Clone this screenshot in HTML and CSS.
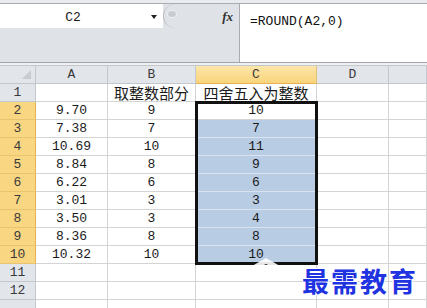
FILE: index.html
```html
<!DOCTYPE html>
<html lang="zh-CN">
<head>
    <meta charset="UTF-8">
    <title>ROUND</title>
    <link rel="stylesheet" href="styles.css">
</head>
<body>
    <div class="top-strip"></div>

    <div class="fbar">
        <div class="fbar-left">
            <div class="fbar-top">
                <div class="namebox">
                    <span class="namebox-text">C2</span>
                    <span class="arrow"></span>
                </div>
                <div class="splitter">
                    <span class="knob"></span>
                    <span class="fx">fx</span>
                </div>
            </div>
        </div>
        <div class="formula">=ROUND(A2,0)</div>
    </div>
    <div class="gap"></div>

    <div class="sheet-wrap">
        <div class="sheet">
            <div class="hd corner"><span class="tri"></span></div>
            <div class="hd">A</div>
            <div class="hd">B</div>
            <div class="hd hd-sel">C</div>
            <div class="hd">D</div>
            <div class="hd"></div>

            <div class="rh">1</div>
            <div class="c"></div>
            <div class="c cjk">取整数部分</div>
            <div class="c cjk">四舍五入为整数</div>
            <div class="c"></div>
            <div class="c"></div>

            <div class="rh rh-sel">2</div>
            <div class="c">9.70</div>
            <div class="c">9</div>
            <div class="c active">10</div>
            <div class="c"></div>
            <div class="c"></div>

            <div class="rh rh-sel">3</div>
            <div class="c">7.38</div>
            <div class="c">7</div>
            <div class="c sel">7</div>
            <div class="c"></div>
            <div class="c"></div>

            <div class="rh rh-sel">4</div>
            <div class="c">10.69</div>
            <div class="c">10</div>
            <div class="c sel">11</div>
            <div class="c"></div>
            <div class="c"></div>

            <div class="rh rh-sel">5</div>
            <div class="c">8.84</div>
            <div class="c">8</div>
            <div class="c sel">9</div>
            <div class="c"></div>
            <div class="c"></div>

            <div class="rh rh-sel">6</div>
            <div class="c">6.22</div>
            <div class="c">6</div>
            <div class="c sel">6</div>
            <div class="c"></div>
            <div class="c"></div>

            <div class="rh rh-sel">7</div>
            <div class="c">3.01</div>
            <div class="c">3</div>
            <div class="c sel">3</div>
            <div class="c"></div>
            <div class="c"></div>

            <div class="rh rh-sel">8</div>
            <div class="c">3.50</div>
            <div class="c">3</div>
            <div class="c sel">4</div>
            <div class="c"></div>
            <div class="c"></div>

            <div class="rh rh-sel">9</div>
            <div class="c">8.36</div>
            <div class="c">8</div>
            <div class="c sel">8</div>
            <div class="c"></div>
            <div class="c"></div>

            <div class="rh rh-sel">10</div>
            <div class="c">10.32</div>
            <div class="c">10</div>
            <div class="c sel">10</div>
            <div class="c"></div>
            <div class="c"></div>

            <div class="rh">11</div>
            <div class="c"></div>
            <div class="c"></div>
            <div class="c"></div>
            <div class="c"></div>
            <div class="c"></div>

            <div class="rh">12</div>
            <div class="c"></div>
            <div class="c"></div>
            <div class="c"></div>
            <div class="c"></div>
            <div class="c"></div>

            <div class="rh"></div>
            <div class="c"></div>
            <div class="c"></div>
            <div class="c"></div>
            <div class="c"></div>
            <div class="c"></div>
        </div>

        <!-- selected range C2:C10 -->
        <div class="selection"></div>

        <div class="watermark">
            <svg class="wm-logo" width="80" height="44" viewBox="0 0 80 44">
                <path d="M8 22 L36 6 L64 22 L56 22 L36 12 L16 22 Z" fill="#ffffff" fill-opacity="0.9"/>
                <rect x="14" y="26" width="50" height="3" fill="#ffffff" fill-opacity="0.85"/>
                <rect x="18" y="32" width="44" height="3" fill="#ffffff" fill-opacity="0.8"/>
                <rect x="22" y="38" width="38" height="3" fill="#ffffff" fill-opacity="0.75"/>
                <rect x="2" y="30" width="10" height="2" fill="#ffffff" fill-opacity="0.8"/>
            </svg>
            <span class="wm-text">最需教育</span>
        </div>
    </div>
</body>
</html>
```

FILE: styles.css
```css
body {
    margin: 0;
    width: 427px;
    height: 308px;
    overflow: hidden;
    background-color: #ffffff;
    font-family: 'Liberation Mono', 'DejaVu Sans Mono', monospace;
    font-size: 13px;
    color: #1a1a1a;
}
.top-strip {
    height: 3px;
    background-color: #e9ebee;
    border-bottom: 1px solid #a9adb2;
}
.fbar {
    display: flex;
    height: 58px;
    border-bottom: 1px solid #a3a7ac;
}
.fbar-left {
    width: 239px;
    background-color: #dfe2e6;
    border-right: 1px solid #a9adb2;
}
.fbar-top {
    display: flex;
    height: 24px;
}
.namebox {
    width: 163px;
    background-color: #ffffff;
    display: flex;
    align-items: center;
}
.namebox-text {
    width: 146px;
    text-align: center;
    padding-top: 2px;
}
.arrow {
    width: 0;
    height: 0;
    border-left: 3px solid transparent;
    border-right: 3px solid transparent;
    border-top: 4px solid #222;
    margin-left: 5px;
    margin-top: 2px;
}
.splitter {
    flex: 1;
    display: flex;
    align-items: center;
    justify-content: space-between;
    border-left: 1px solid #b9bdc2;
    border-radius: 12px 0 0 12px;
    padding-left: 3px;
    padding-right: 6px;
}
.knob {
    width: 8px;
    height: 6px;
    border-radius: 50%;
    background-color: #c9ccd0;
    border: 1px solid #eef0f2;
    margin-bottom: 4px;
}
.fx {
    font-family: 'Liberation Serif', serif;
    font-style: italic;
    font-weight: bold;
    font-size: 13px;
    color: #333;
    padding-top: 1px;
}
.formula {
    flex: 1;
    padding-left: 10px;
    padding-top: 10px;
    color: #111;
}
.gap {
    height: 2px;
    background-color: #eef0f2;
    border-bottom: 1px solid #c4c8cd;
}
.sheet-wrap {
    position: relative;
}
.sheet {
    display: grid;
    grid-template-columns: 36px 72px 88px 121px 72px 38px;
    grid-auto-rows: 18px;
}
.sheet > div {
    box-sizing: border-box;
    border-right: 1px solid #d4d4d4;
    border-bottom: 1px solid #d4d4d4;
    text-align: center;
    line-height: 18px;
    white-space: nowrap;
    overflow: hidden;
}
.sheet > .hd {
    background-color: #e2e6eb;
    border-right-color: #c3c8ce;
    border-bottom-color: #c3c8ce;
    color: #3a3a3a;
}
.sheet > .hd-sel {
    background: linear-gradient(#fce6a9, #f9d47c);
    border-bottom-color: #e6b353;
    border-right-color: #e0c27c;
}
.corner {
    position: relative;
}
.tri {
    position: absolute;
    right: 4px;
    bottom: 4px;
    width: 0;
    height: 0;
    border-left: 9px solid transparent;
    border-bottom: 9px solid #c8ccd1;
}
.sheet > .rh {
    background-color: #e2e6eb;
    border-right-color: #c3c8ce;
    border-bottom-color: #c3c8ce;
    color: #3a3a3a;
}
.sheet > .rh-sel {
    background-color: #f9d682;
    border-bottom-color: #e9c36f;
    border-right-color: #e6b353;
}
.sheet > .cjk {
    font-family: 'Noto Sans CJK SC', sans-serif;
    font-size: 15px;
    line-height: 17px;
    overflow: visible;
}
.sheet > .sel {
    background-color: #b8cce4;
    border-bottom-color: #d9e3f0;
    border-right-color: #d9e3f0;
}
.selection {
    position: absolute;
    left: 195px;
    top: 35px;
    width: 123px;
    height: 164px;
    box-sizing: border-box;
    border: 3px solid #111;
}
.watermark {
    position: absolute;
    left: 230px;
    top: 186px;
    display: flex;
    align-items: flex-end;
}
.wm-logo {
    margin-right: -8px;
}
.wm-text {
    font-family: 'Noto Sans CJK SC', sans-serif;
    font-weight: bold;
    font-size: 27px;
    line-height: 30px;
    color: #1f33e0;
    letter-spacing: 2px;
    text-shadow: 1px 1px 0 #fff, -1px -1px 0 #fff, 1px -1px 0 #fff, -1px 1px 0 #fff;
}
```
